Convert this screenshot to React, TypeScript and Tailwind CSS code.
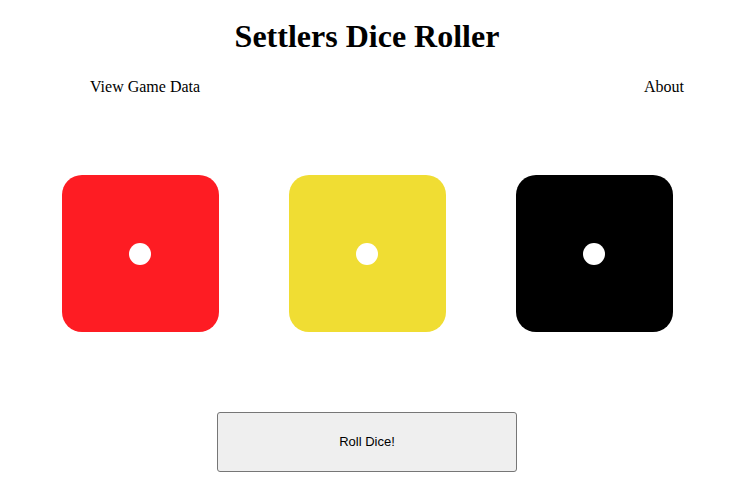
const dice = [
  { name: "red", color: "bg-[#fe1c23]" },
  { name: "yellow", color: "bg-[#f0dd33]" },
  { name: "black", color: "bg-black" },
];

function Die({ color }: { color: string }) {
  return (
    <div
      className={`flex size-[157px] items-center justify-center rounded-[20px] ${color}`}
    >
      <div className="size-[22px] rounded-full bg-white" />
    </div>
  );
}

export default function App() {
  return (
    <div className="min-h-[499px] w-[746px] bg-white font-['Liberation_Serif',serif] text-black">
      <div className="w-[734px]">
        <h1 className="pt-[18px] text-center text-[32px] font-bold leading-[37px]">
          Settlers Dice Roller
        </h1>

        <nav className="mt-[23px] flex justify-between pl-[90px] pr-[50px] text-base leading-[18px]">
          <a href="#">View Game Data</a>
          <a href="#">About</a>
        </nav>

        <div className="mt-[79px] flex justify-center gap-[70px]">
          {dice.map((d) => (
            <Die key={d.name} color={d.color} />
          ))}
        </div>

        <div className="mt-[80px] flex justify-center">
          <button
            type="button"
            className="h-[60px] w-[300px] rounded-[3px] border border-[#767676] bg-[#efefef] font-['Liberation_Sans',sans-serif] text-[13px] text-black"
          >
            Roll Dice!
          </button>
        </div>
      </div>
    </div>
  );
}
